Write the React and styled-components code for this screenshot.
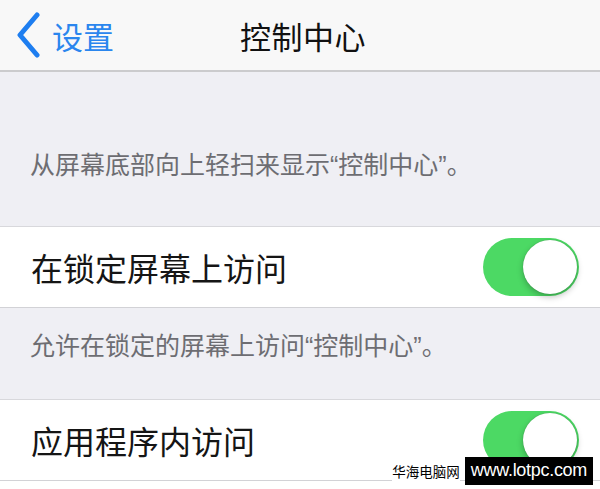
import React from "react";
import styled, { createGlobalStyle } from "styled-components";

const GlobalStyle = createGlobalStyle`
  body {
    margin: 0;
    background: #ffffff;
    font-family: "Liberation Sans", "Noto Sans CJK SC", sans-serif;
  }
`;

const Screen = styled.div`
  position: relative;
  width: 600px;
  height: 489px;
  overflow: hidden;
  background: #ffffff;
`;

const NavBar = styled.div`
  height: 70px;
  background: #f8f8f8;
  border-bottom: 2px solid #cbcbcd;
  display: grid;
  grid-template-columns: 1fr auto 1fr;
  align-items: center;
`;

const BackButton = styled.div`
  display: flex;
  align-items: center;
  gap: 11px;
  padding-left: 15px;
  color: #2a86ee;
  font-size: 31px;
`;

const Title = styled.div`
  font-size: 31px;
  color: #111;
  letter-spacing: 0.5px;
  padding-left: 6px;
`;

const GroupFooter = styled.div`
  background: #efeff4;
  padding: ${(p) => p.$top}px 30px ${(p) => p.$bottom}px;
  font-size: 25px;
  line-height: 30px;
  color: #6d6d72;
  border-bottom: 1px solid #d8d8dc;
`;

const Row = styled.div`
  height: 80px;
  background: #ffffff;
  display: flex;
  align-items: center;
  justify-content: space-between;
  padding: 0 21px 0 31px;
  border-bottom: 1px solid #d2d2d6;
`;

const RowLabel = styled.span`
  font-size: 32px;
  color: #151515;
`;

const Switch = styled.div`
  position: relative;
  width: 96px;
  height: 58px;
  border-radius: 29px;
  background: #4cd964;
  flex-shrink: 0;
`;

const Knob = styled.div`
  position: absolute;
  top: 2px;
  right: 2px;
  width: 54px;
  height: 54px;
  border-radius: 50%;
  background: #ffffff;
  box-shadow: 0 3px 6px rgba(0, 0, 0, 0.25), 0 0 1px rgba(0, 0, 0, 0.3);
`;

const Watermark = styled.div`
  position: absolute;
  right: 7px;
  bottom: 4px;
  display: flex;
  align-items: center;
  gap: 5px;
`;

const WatermarkName = styled.span`
  background: #ffffff;
  color: #000;
  font-size: 13.5px;
  padding: 2px 0;
`;

const WatermarkUrl = styled.span`
  background: #000;
  color: #fff;
  font-size: 18px;
  padding: 3px 6px 4px;
  letter-spacing: -0.3px;
`;

function Toggle() {
  return (
    <Switch>
      <Knob />
    </Switch>
  );
}

export default function App() {
  return (
    <>
      <GlobalStyle />
      <Screen>
        <NavBar>
          <BackButton>
            <svg width="26" height="46" viewBox="0 0 26 46">
              <polyline
                points="22,3 5,23 22,43"
                fill="none"
                stroke="#1e7ef0"
                strokeWidth="5"
                strokeLinecap="round"
                strokeLinejoin="round"
              />
            </svg>
            <span>设置</span>
          </BackButton>
          <Title>控制中心</Title>
          <div />
        </NavBar>
        <GroupFooter $top={78} $bottom={46}>
          从屏幕底部向上轻扫来显示“控制中心”。
        </GroupFooter>
        <Row>
          <RowLabel>在锁定屏幕上访问</RowLabel>
          <Toggle />
        </Row>
        <GroupFooter $top={23} $bottom={38}>
          允许在锁定的屏幕上访问“控制中心”。
        </GroupFooter>
        <Row>
          <RowLabel>应用程序内访问</RowLabel>
          <Toggle />
        </Row>
        <Watermark>
          <WatermarkName>华海电脑网</WatermarkName>
          <WatermarkUrl>www.lotpc.com</WatermarkUrl>
        </Watermark>
      </Screen>
    </>
  );
}
